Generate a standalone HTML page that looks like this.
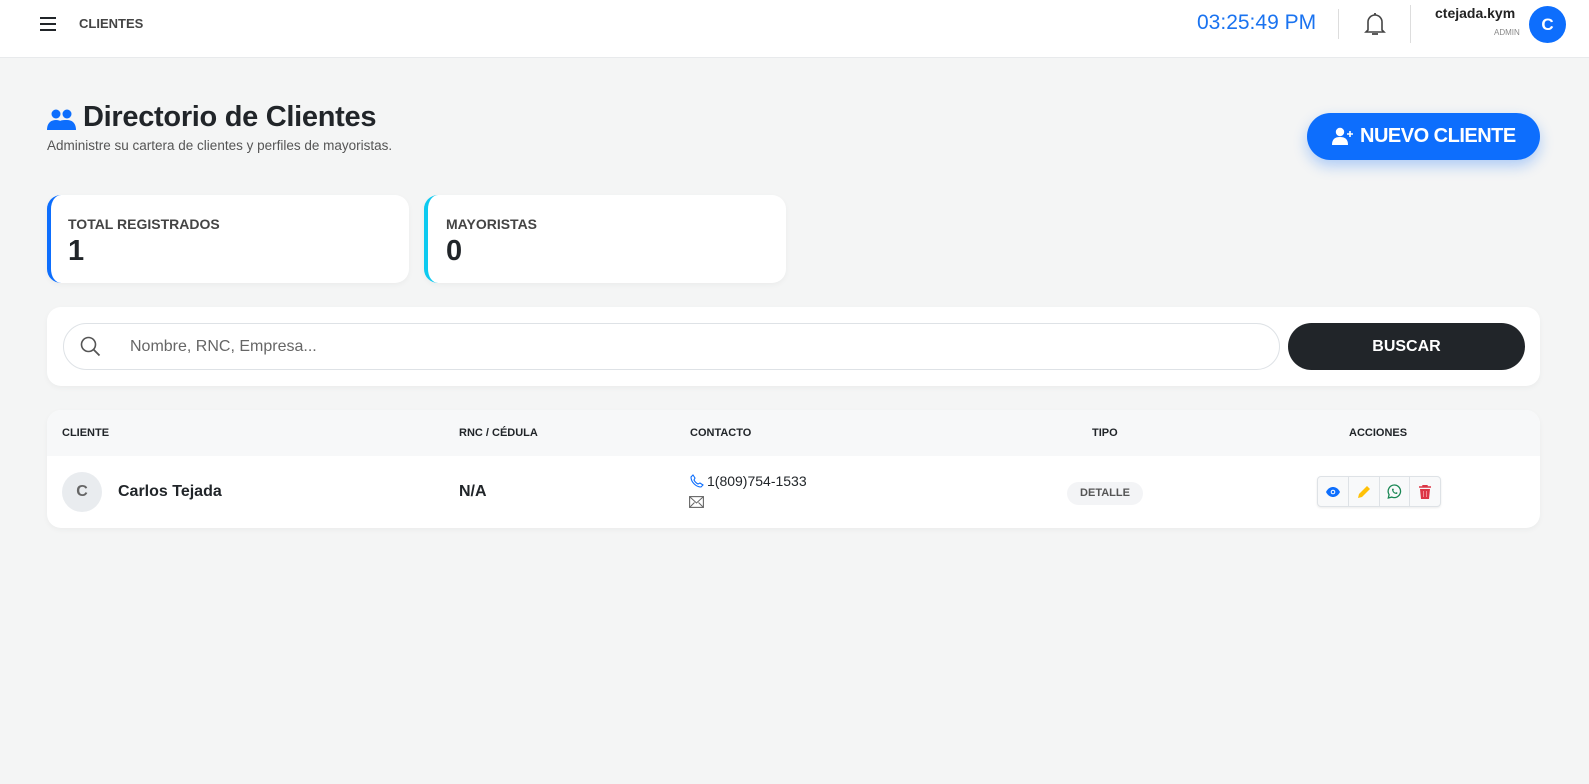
<!DOCTYPE html>
<html><head><meta charset="utf-8"><style>
*{box-sizing:border-box;margin:0;padding:0}
body{width:1589px;height:784px;background:#f4f5f5;font-family:"Liberation Sans",sans-serif;color:#212529;position:relative;overflow:hidden}
.hdr{position:absolute;left:0;top:0;width:1589px;height:58px;background:#fff;border-bottom:1px solid #e8eaec}
.abs{position:absolute}
.card{position:absolute;background:#fff;border-radius:14px;box-shadow:0 2px 6px rgba(0,0,0,.04)}
.th{position:absolute;top:427px;font-size:11px;font-weight:bold;color:#212529}
.act{position:absolute;top:476px;left:1317px;width:124px;height:31px;border:1px solid #dee2e6;border-radius:4px;background:#f8f9fa;display:flex;box-shadow:0 1px 2px rgba(0,0,0,.08)}
.act div{flex:1;border-right:1px solid #dee2e6;display:flex;align-items:center;justify-content:center}
.act div:last-child{border-right:none}
</style></head><body>
<div class="hdr">
 <svg class="abs" style="left:39px;top:16px" width="18" height="16" viewBox="0 0 18 16"><path d="M1 2h16M1 8h16M1 14h16" stroke="#212529" stroke-width="2"/></svg>
 <div class="abs" style="left:79px;top:16px;font-size:13px;font-weight:bold;color:#444">CLIENTES</div>
 <div class="abs" style="left:1197px;top:11px;font-size:21px;color:#1a73f0">03:25:49 PM</div>
 <div class="abs" style="left:1338px;top:9px;width:1px;height:30px;background:#ddd"></div>
 <svg class="abs" style="left:1364px;top:11px" width="22" height="26" viewBox="0 0 22 26"><path d="M4 19V11a7 7 0 0 1 14 0v8l2 2H2z" fill="none" stroke="#444" stroke-width="1.6"/><path d="M11 2v2M8 23h6" stroke="#444" stroke-width="1.8"/></svg>
 <div class="abs" style="left:1410px;top:5px;width:1px;height:38px;background:#ddd"></div>
 <div class="abs" style="left:1435px;top:5px;font-size:14px;font-weight:bold;color:#222">ctejada.kym</div>
 <div class="abs" style="left:1494px;top:28px;font-size:8px;color:#888">ADMIN</div>
 <div class="abs" style="left:1529px;top:6px;width:37px;height:37px;border-radius:50%;background:#0d6efd;color:#fff;font-weight:bold;font-size:17px;text-align:center;line-height:37px">C</div>
</div>
<svg class="abs" style="left:47px;top:109px" width="29" height="22" viewBox="0 0 29 22"><circle cx="9" cy="5" r="4.5" fill="#0d6efd"/><circle cx="20" cy="5" r="4.5" fill="#0d6efd"/><path d="M0 21c0-7 4-10 9-10s9 3 9 10z M15 21c0-5-1-7-2-9 2-1 4-1 7-1 5 0 9 3 9 10z" fill="#0d6efd"/></svg>
<div class="abs" style="left:83px;top:101px;font-size:29px;font-weight:bold;color:#212529;letter-spacing:-.3px">Directorio de Clientes</div>
<div class="abs" style="left:47px;top:138px;font-size:13.5px;color:#555">Administre su cartera de clientes y perfiles de mayoristas.</div>
<div class="abs" style="left:1307px;top:113px;width:233px;height:47px;border-radius:24px;background:#0d6efd;box-shadow:0 6px 14px rgba(13,110,253,.3);color:#fff;font-weight:bold;font-size:20px;line-height:47px;padding-left:53px;letter-spacing:-.5px">NUEVO CLIENTE</div>
<svg class="abs" style="left:1332px;top:127px" width="22" height="18" viewBox="0 0 22 18"><circle cx="8" cy="5" r="4.2" fill="#fff"/><path d="M0 18c0-6 3-8 8-8s8 2 8 8z" fill="#fff"/><path d="M18 4v6M15 7h6" stroke="#fff" stroke-width="1.6"/></svg>

<div class="card" style="left:47px;top:195px;width:362px;height:88px;border-left:4px solid #0d6efd"><div class="abs" style="left:17px;top:21px;font-size:14px;font-weight:bold;color:#444">TOTAL REGISTRADOS</div><div class="abs" style="left:17px;top:40px;font-size:29px;font-weight:bold">1</div></div>
<div class="card" style="left:424px;top:195px;width:362px;height:88px;border-left:4px solid #0dcaf0"><div class="abs" style="left:18px;top:21px;font-size:14px;font-weight:bold;color:#444">MAYORISTAS</div><div class="abs" style="left:18px;top:40px;font-size:29px;font-weight:bold">0</div></div>

<div class="card" style="left:47px;top:307px;width:1493px;height:79px">
 <div class="abs" style="left:16px;top:16px;width:1217px;height:47px;border:1px solid #dee2e6;border-radius:24px"></div>
 <svg class="abs" style="left:33px;top:29px" width="21" height="21" viewBox="0 0 21 21"><circle cx="8.5" cy="8.5" r="7" fill="none" stroke="#555" stroke-width="1.6"/><path d="M13.5 13.5l6 6" stroke="#555" stroke-width="1.8"/></svg>
 <div class="abs" style="left:83px;top:31px;font-size:16px;color:#666">Nombre, RNC, Empresa...</div>
 <div class="abs" style="left:1241px;top:16px;width:237px;height:47px;border-radius:24px;background:#212529;color:#fff;font-weight:bold;font-size:16px;text-align:center;line-height:47px">BUSCAR</div>
</div>

<div class="card" style="left:47px;top:410px;width:1493px;height:118px;overflow:hidden">
 <div class="abs" style="left:0;top:0;width:1493px;height:46px;background:#f7f8f9"></div>
</div>
<div class="th" style="left:62px">CLIENTE</div>
<div class="th" style="left:459px">RNC / CÉDULA</div>
<div class="th" style="left:690px">CONTACTO</div>
<div class="th" style="left:1092px">TIPO</div>
<div class="th" style="left:1349px">ACCIONES</div>
<div class="abs" style="left:62px;top:472px;width:40px;height:40px;border-radius:50%;background:#e9ecef;color:#666;font-weight:bold;font-size:16px;text-align:center;line-height:40px">C</div>
<div class="abs" style="left:118px;top:483px;font-size:16px;font-weight:bold">Carlos Tejada</div>
<div class="abs" style="left:459px;top:483px;font-size:16px;font-weight:bold">N/A</div>
<svg class="abs" style="left:690px;top:474px" width="14" height="14" viewBox="0 0 14 14"><path d="M3 1l2 3-1 2c1 2 2 3 4 4l2-1 3 2-2 2C6 13 1 8 1 3z" fill="none" stroke="#0d6efd" stroke-width="1.1"/></svg>
<div class="abs" style="left:707px;top:473px;font-size:14px">1(809)754-1533</div>
<svg class="abs" style="left:689px;top:496px" width="15" height="12" viewBox="0 0 15 12"><rect x=".6" y=".6" width="13.8" height="10.8" fill="none" stroke="#666" stroke-width="1.1"/><path d="M1 1l6.5 6L14 1M1 11l4.5-4.5M14 11l-4.5-4.5" fill="none" stroke="#666" stroke-width="1"/></svg>
<div class="abs" style="left:1067px;top:482px;width:76px;height:23px;border-radius:12px;background:#f3f4f6;font-size:11px;font-weight:bold;color:#555;text-align:center;line-height:23px">DETALLE</div>
<div class="act">
 <div><svg width="14" height="10" viewBox="0 0 14 10"><path d="M0 5C2 1 5 0 7 0s5 1 7 5c-2 4-5 5-7 5S2 9 0 5z" fill="#0d6efd"/><circle cx="7" cy="5" r="2.3" fill="#fff"/><circle cx="7" cy="5" r="1.3" fill="#0d6efd"/></svg></div>
 <div><svg width="14" height="14" viewBox="0 0 14 14"><path d="M10 1l3 3-8 8-4 1 1-4z" fill="#ffc107"/></svg></div>
 <div><svg width="15" height="15" viewBox="0 0 15 15"><path d="M7.5 1a6.3 6.3 0 0 0-5.4 9.6L1.3 14l3.5-.9A6.3 6.3 0 1 0 7.5 1z" fill="none" stroke="#198754" stroke-width="1.3"/><path d="M5 5c0 3 2 5 5 5l.6-1.2-1.5-.7-.6.6c-1-.4-1.8-1.2-2.2-2.2l.6-.6-.7-1.5z" fill="#198754"/></svg></div>
 <div><svg width="12" height="14" viewBox="0 0 12 14"><path d="M0 2h12M4 2V0.5h4V2" stroke="#dc3545" stroke-width="1.4" fill="none"/><path d="M1 4h10l-1 10H2z" fill="#dc3545"/><path d="M4.5 6v6M7.5 6v6" stroke="#f8a0a8" stroke-width=".8"/></svg></div>
</div>
</body></html>
